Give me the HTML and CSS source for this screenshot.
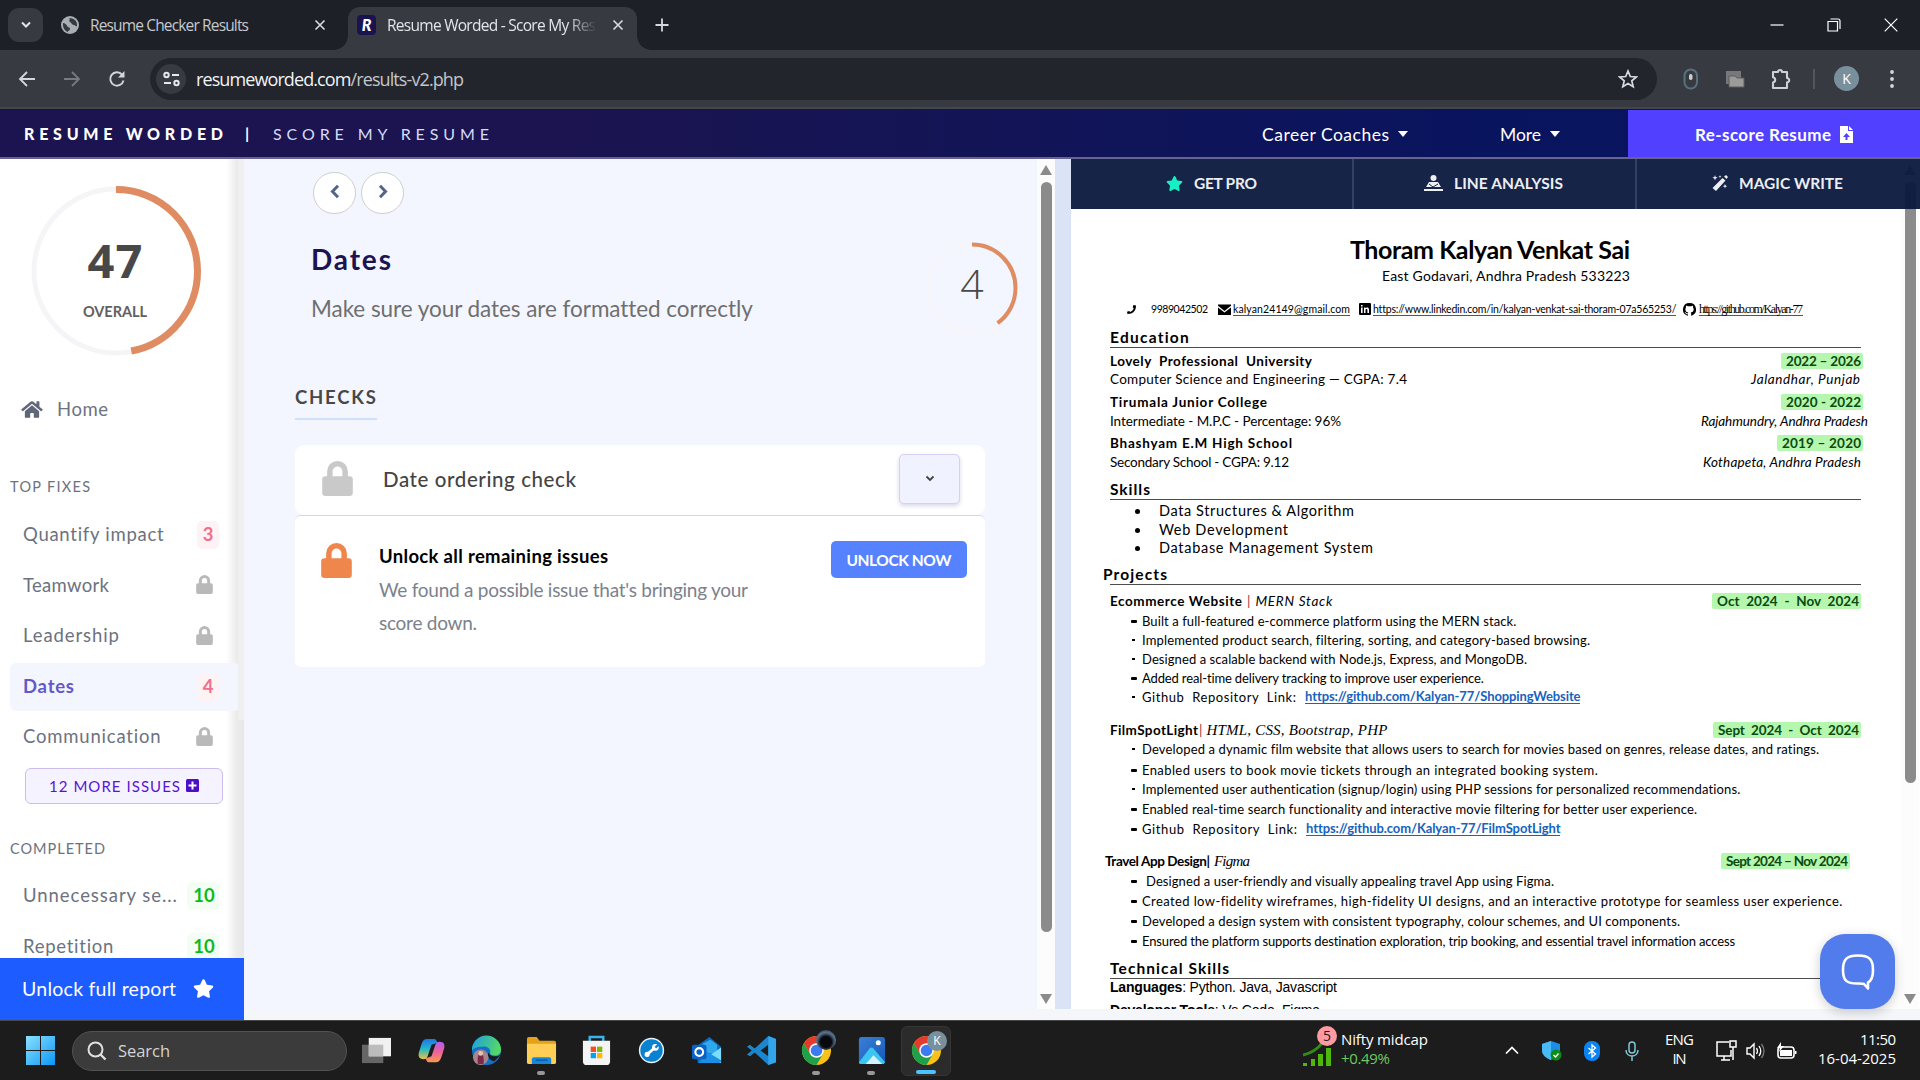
FILE: index.html
```html
<!DOCTYPE html>
<html lang="en">
<head>
<meta charset="utf-8">
<title>Resume Worded - Score My Resume</title>
<link rel="stylesheet" href="styles.css">
</head>
<body>
<svg class="defs" aria-hidden="true">
  <symbol id="lock" viewBox="0 0 448 512"><path d="M400 224h-24v-72a152 152 0 0 0-304 0v72H48a48 48 0 0 0-48 48v192a48 48 0 0 0 48 48h352a48 48 0 0 0 48-48V272a48 48 0 0 0-48-48zm-104 0H152v-72a72 72 0 0 1 144 0z"/></symbol>
  <symbol id="star" viewBox="0 0 576 512"><path d="M259.300 17.800L194 150.200 47.900 171.500c-26.200 3.800-36.700 36.100-17.700 54.600l105.700 103-25 145.500c-4.500 26.300 23.200 46 46.400 33.700L288 439.600l130.700 68.700c23.200 12.200 50.900-7.400 46.400-33.700l-25-145.500 105.700-103c19-18.500 8.500-50.800-17.700-54.600L382 150.200 316.700 17.800c-11.700-23.600-45.600-23.900-57.400 0z"/></symbol>
  <symbol id="cross" viewBox="0 0 12 12"><path d="M1.500 1.500l9 9M10.500 1.500l-9 9" fill="none" stroke="currentColor" stroke-width="1.700"/></symbol>
  <symbol id="chrome" viewBox="0 0 32 32"><circle cx="16" cy="16" r="15" fill="#fbc116"/><path d="M3 8.500A15 15 0 0 1 29 8.500H16L9.500 19.750z" fill="#e33b2e"/><path d="M3 8.500A15 15 0 0 0 16 31l6.500-11.250H9.500z" fill="#1fa04b"/><circle cx="16" cy="16" r="7.500" fill="#fff"/><circle cx="16" cy="16" r="6" fill="#3d7cf0"/></symbol>
</svg>

<header class="tabstrip">
  <button class="tab-search"><svg width="12" height="8" viewBox="0 0 12 8"><path d="M2 1.500l4 4 4-4" fill="none" stroke="#e3e5e8" stroke-width="2"/></svg></button>
  <div class="tab">
    <svg class="globe" viewBox="0 0 18 18"><circle cx="9" cy="9" r="9" fill="#a9aeb5"/><path d="M2 7c2 0 4 2 4 3s3 1 3 3-2 1-2 3c-3-1-5.500-4-5-9zM8 2c2 1-1 3 1 4s2 3 4 3 1 2 3 1c.5-4-2-8-8-8z" fill="#353940"/></svg>
    <span class="tab-title" data-w="159">Resume Checker Results</span>
    <svg class="tab-close" viewBox="0 0 12 12"><use href="#cross"/></svg>
  </div>
  <div class="tab tab-active">
    <span class="favicon">R</span>
    <span class="tab-title fade"><span data-w="209">Resume Worded - Score My Res</span></span>
    <svg class="tab-close" viewBox="0 0 12 12"><use href="#cross"/></svg>
  </div>
  <svg class="new-tab" viewBox="0 0 14 14"><path d="M7 .5v13M.5 7h13" stroke="#d5d8dc" stroke-width="1.800"/></svg>
  <div class="window-controls">
    <svg viewBox="0 0 14 14"><path d="M.5 7h13" stroke="#fff" stroke-width="1.200"/></svg>
    <svg viewBox="0 0 14 14"><path d="M1 3.500h9.500V13H1z" fill="none" stroke="#fff" stroke-width="1.200"/><path d="M3.500 1H11q2 0 2 2v8" fill="none" stroke="#fff" stroke-width="1.200"/></svg>
    <svg viewBox="0 0 14 14"><path d="M.7.700l12.600 12.600M13.300.700L.7 13.300" stroke="#fff" stroke-width="1.200"/></svg>
  </div>
</header>

<div class="toolbar">
  <div class="nav-icons">
    <svg viewBox="0 0 18 18"><path d="M17 9H2M9 2L2 9l7 7" fill="none" stroke="#d3d6da" stroke-width="1.800"/></svg>
    <svg viewBox="0 0 18 18"><path d="M1 9h15M9 2l7 7-7 7" fill="none" stroke="#777a80" stroke-width="1.800"/></svg>
    <svg viewBox="0 0 18 18"><path d="M15.500 10.500A6.700 6.700 0 1 1 14 4.500l1.500 1.700" fill="none" stroke="#d3d6da" stroke-width="1.900"/><path d="M16.500 1v6.500H10z" fill="#d3d6da"/></svg>
  </div>
  <div class="omnibox">
    <span class="site-info"><svg width="17" height="16" viewBox="0 0 17 16"><g fill="none" stroke="#e6e8ea" stroke-width="2"><circle cx="3.500" cy="4" r="2.200"/><path d="M9 4h7M1 12h7"/><circle cx="13.500" cy="12" r="2.200"/></g></svg></span>
    <span class="url" data-w="268">resumeworded.com<span class="path">/results-v2.php</span></span>
    <svg class="bookmark" viewBox="0 0 20 20"><path d="M10 2l2.300 5.500 6 .5-4.500 3.900 1.400 5.800L10 14.600l-5.200 3.100 1.400-5.800L1.700 8l6-.5z" fill="none" stroke="#d9dbde" stroke-width="1.700"/></svg>
  </div>
  <div class="extensions">
    <svg width="16" height="22" viewBox="0 0 16 22"><rect x="1.500" y="1.500" width="12.500" height="19" rx="6.200" fill="none" stroke="#56717c" stroke-width="2"/><rect x="6" y="6" width="3.500" height="6" rx="1.700" fill="#c9ced2"/></svg>
    <svg width="20" height="18" viewBox="0 0 20 18"><path d="M1 1h15v13H1z" fill="#77787a"/><path d="M4 6h6l2 2h7v9H4z" fill="#9b9b99" stroke="#5b5c5e"/></svg>
    <svg width="22" height="22" viewBox="0 0 22 22"><path d="M3 4h5a2 2 0 1 1 4 0h5v6a2.200 2.200 0 1 1 0 4.400V20H3v-5.500a2.700 2.700 0 0 0 0-5.300z" fill="none" stroke="#cfd1d5" stroke-width="2.100" stroke-linejoin="round"/></svg>
    <i class="divider"></i>
    <span class="profile">K</span>
    <svg class="kebab" width="6" height="20" viewBox="0 0 6 20"><g fill="#d3d6da"><circle cx="3" cy="3" r="1.900"/><circle cx="3" cy="10" r="1.900"/><circle cx="3" cy="17" r="1.900"/></g></svg>
  </div>
</div>

<nav class="site-header">
  <span class="brand" data-w="199">RESUME WORDED</span>
  <span class="brand-rule">|</span>
  <span class="brand-sub" data-w="216">SCORE MY RESUME</span>
  <a class="menu coaches"><span data-w="127">Career Coaches</span><i class="caret"></i></a>
  <a class="menu more"><span data-w="41">More</span><i class="caret"></i></a>
  <a class="rescore"><span data-w="136">Re-score Resume</span>
    <svg width="13" height="17" viewBox="0 0 13 17"><path fill="#fff" d="M0 0h8v5h5v12H0zM9 0l4 4H9z"/><path fill="#5140ff" d="M6.500 7l3.500 4H7.500v3h-2v-3H3z"/></svg></a>
</nav>

<div class="workspace">
  <aside class="sidebar">
    <div class="sidebar-scroll">
      <div class="overall">
        <svg viewBox="0 0 170 170"><circle cx="85" cy="85" r="82" fill="none" stroke="#f5f5f7" stroke-width="5"/><circle class="arc" cx="85" cy="85" r="81.500" pathLength="100" stroke-width="7" stroke-dasharray="47 100"/></svg>
        <div class="overall-text"><b data-w="55">47</b><span data-w="64">OVERALL</span></div>
      </div>
      <a class="home"><svg width="22" height="19" viewBox="0 0 576 512"><path d="M280 148L96 300v164a16 16 0 0 0 16 16h112a16 16 0 0 0 16-16v-96a16 16 0 0 1 16-16h64a16 16 0 0 1 16 16v96a16 16 0 0 0 16 16h112a16 16 0 0 0 16-16V300L296 148a12 12 0 0 0-16 0zM572 251l-84-68V44a12 12 0 0 0-12-12h-56a12 12 0 0 0-12 12v73l-90-74a48 48 0 0 0-61 0L4 251a12 12 0 0 0-1 17l25 31a12 12 0 0 0 17 2l235-194a12 12 0 0 1 16 0l235 194a12 12 0 0 0 17-2l25-31a12 12 0 0 0-1-17z"/></svg><span data-w="51">Home</span></a>
      <h4><span data-w="80">TOP FIXES</span></h4>
      <ul>
        <li><span data-w="141">Quantify impact</span><em class="bad">3</em></li>
        <li><span data-w="86">Teamwork</span><svg class="lock"><use href="#lock"/></svg></li>
        <li><span data-w="96">Leadership</span><svg class="lock"><use href="#lock"/></svg></li>
        <li class="current"><span data-w="51">Dates</span><em class="bad">4</em></li>
        <li><span data-w="138">Communication</span><svg class="lock"><use href="#lock"/></svg></li>
      </ul>
      <a class="more-issues"><span data-w="131">12 MORE ISSUES</span><svg width="13" height="13" viewBox="0 0 13 13"><rect width="13" height="13" rx="1.500" fill="#4b0fc9"/><path d="M6.500 2.500v8M2.500 6.500h8" stroke="#fff" stroke-width="2"/></svg></a>
      <h4 class="completed"><span data-w="95">COMPLETED</span></h4>
      <ul>
        <li><span data-w="154">Unnecessary se...</span><em class="good">10</em></li>
        <li><span data-w="91">Repetition</span><em class="good">10</em></li>
      </ul>
    </div>
    <a class="unlock-report"><span data-w="154">Unlock full report</span><svg><use href="#star"/></svg></a>
  </aside>

  <main class="report">
    <div class="pager">
      <button><svg width="10" height="15" viewBox="0 0 10 15"><path d="M8 1.800L2.500 7.500 8 13.200" fill="none" stroke="#55628a" stroke-width="3"/></svg></button>
      <button><svg width="10" height="15" viewBox="0 0 10 15"><path d="M2 1.800l5.500 5.700L2 13.200" fill="none" stroke="#55628a" stroke-width="3"/></svg></button>
    </div>
    <div class="report-head">
      <div>
        <h1><span data-w="80">Dates</span></h1>
        <p><span data-w="441">Make sure your dates are formatted correctly</span></p>
      </div>
      <div class="score">
        <svg viewBox="0 0 92 92"><circle cx="46" cy="46" r="44" fill="none" stroke="#f6f5fa" stroke-width="3"/><circle class="arc" cx="46" cy="46" r="43.500" pathLength="100" stroke-width="4" stroke-dasharray="40 100"/></svg>
        <span>4</span>
      </div>
    </div>
    <h2 class="checks"><span data-w="81">CHECKS</span></h2>
    <section class="card check">
      <svg class="big-lock"><use href="#lock"/></svg>
      <span data-w="193">Date ordering check</span>
      <button><svg width="10" height="8" viewBox="0 0 10 8"><path d="M1.500 1.500L5 5l3.500-3.500" fill="none" stroke="#444" stroke-width="1.800"/></svg></button>
    </section>
    <section class="card upsell">
      <svg class="big-lock orange"><use href="#lock"/></svg>
      <div class="upsell-text">
        <h3><span data-w="229">Unlock all remaining issues</span></h3>
        <p><span data-w="369">We found a possible issue that's bringing your</span></p>
        <p><span data-w="98">score down.</span></p>
      </div>
      <a class="unlock-now"><span data-w="105">UNLOCK NOW</span></a>
    </section>
  </main>

  <div class="scrollbar main-bar"><i class="up"></i><i class="thumb"></i><i class="down"></i></div>

  <section class="preview">
    <div class="actions">
      <a class="get-pro"><svg width="17" height="15"><use href="#star" fill="#16f0c4"/></svg><span data-w="63">GET PRO</span></a>
      <a><svg width="19" height="17" viewBox="0 0 19 17"><circle cx="9.500" cy="3" r="3"/><path d="M5 7h9l3 5H2zM0 14h19v2H0z"/><path d="M5 9l4 3 5-3" stroke="#16244a" fill="none"/></svg><span data-w="109">LINE ANALYSIS</span></a>
      <a><svg width="16" height="16" viewBox="0 0 16 16"><path d="M10.500 3l3 2.500L4 16l-3.500-3zM3 0l.7 2 2 .7-2 .7L3 5.500l-.7-2-2-.8 2-.7zM8 0l.4 1.200 1.200.4-1.200.4L8 3.200 7.600 2l-1.200-.4 1.200-.4zM13 9l.6 1.600 1.700.6-1.700.6L13 13.500l-.6-1.700-1.700-.6 1.700-.6zM12 1.500L14 0l2 2-1.500 2z"/></svg><span data-w="104">MAGIC WRITE</span></a>
    </div>
    <div class="viewport">
      <article class="resume">
        <div class="line name"><b data-w="280">Thoram Kalyan Venkat Sai</b></div>
        <div class="line place"><span data-w="248">East Godavari, Andhra Pradesh 533223</span></div>
        <div class="line contact">
          <svg class="phone" width="9" height="9" viewBox="0 0 9 9"><path d="M6.500 0L9 .5C9 6 6 9 .5 9L0 6.800l2.200-.8 1 1C5 6.300 6.200 5 6.700 3.300l-1-1z"/></svg>
          <span class="tel" data-w="57">9989042502</span>
          <svg class="mail" width="13" height="11" viewBox="0 0 13 11"><path d="M0 .5h13v1.300L6.500 7 0 1.800zM0 3.500L6.500 8.500 13 3.500V11H0z"/></svg>
          <u data-w="117">kalyan24149@gmail.com</u>
          <svg class="linkedin" width="12" height="12" viewBox="0 0 12 12"><rect width="12" height="12" rx="1"/><path fill="#fff" d="M2 4.500h1.600V10H2zM2 2h1.600v1.500H2zM5 4.500h1.500v.8C7.500 4 10 4.200 10 6.600V10H8.400V7c0-1.500-1.900-1.300-1.900 0v3H5z"/></svg>
          <u data-w="303">https://www.linkedin.com/in/kalyan-venkat-sai-thoram-07a565253/</u>
          <svg class="github" width="13" height="13" viewBox="0 0 16 16"><path d="M8 0a8 8 0 0 0-2.530 15.590c.4.070.55-.17.55-.38v-1.490c-2.010.37-2.530-.49-2.690-.94-.09-.23-.48-.94-.82-1.130-.28-.15-.68-.52-.01-.53.63-.01 1.080.58 1.230.82.720 1.210 1.870.87 2.330.66.070-.52.280-.87.510-1.070-1.780-.2-3.640-.89-3.640-3.950 0-.87.310-1.590.82-2.150-.08-.2-.36-1.020.08-2.120 0 0 .67-.21 2.200.82a7.500 7.500 0 0 1 4 0c1.530-1.040 2.200-.82 2.200-.82.440 1.100.160 1.920.080 2.120.510.560.820 1.270.820 2.150 0 3.070-1.870 3.750-3.650 3.950.290.250.540.730.540 1.480v2.200c0 .21.150.46.550.38A8 8 0 0 0 8 0z"/></svg>
          <u class="serif" data-w="104">https://github.com/Kalyan-77</u>
        </div>

        <h5><span data-w="79">Education</span></h5>
        <div class="line m5"><b data-w="202">Lovely&nbsp; Professional&nbsp; University</b><mark><span data-w="75">2022 – 2026</span></mark></div>
        <div class="line m2"><span data-w="297">Computer Science and Engineering — CGPA: 7.4</span><i class="inset1" data-w="109">Jalandhar, Punjab</i></div>
        <div class="line m7"><b data-w="157">Tirumala Junior College</b><mark><span data-w="75">2020 - 2022</span></mark></div>
        <div class="line m3"><span data-w="231">Intermediate - M.P.C - Percentage: 96%</span><i class="outset" data-w="167">Rajahmundry, Andhra Pradesh</i></div>
        <div class="line m6"><b data-w="182">Bhashyam E.M High School</b><mark><span data-w="79">2019 – 2020</span></mark></div>
        <div class="line m3"><span data-w="179">Secondary School - CGPA: 9.12</span><i data-w="158">Kothapeta, Andhra Pradesh</i></div>

        <h5 class="m11"><span data-w="40">Skills</span></h5>
        <div class="line skill m3"><span data-w="195">Data Structures &amp; Algorithm</span></div>
        <div class="line skill m3"><span data-w="129">Web Development</span></div>
        <div class="line skill m2"><span data-w="214">Database Management System</span></div>

        <h5 class="m10 shifted"><span data-w="64">Projects</span></h5>
        <div class="line project m8"><b data-w="132">Ecommerce Website</b><s>|</s><i data-w="77">MERN Stack</i><mark><span data-w="142">Oct&nbsp; 2024&nbsp; -&nbsp; Nov&nbsp; 2024</span></mark></div>
        <div class="line item m4 wide"><span data-w="374">Built a full-featured e-commerce platform using the MERN stack.</span></div>
        <div class="line item m3"><span data-w="448">Implemented product search, filtering, sorting, and category-based browsing.</span></div>
        <div class="line item m3"><span data-w="385">Designed a scalable backend with Node.js, Express, and MongoDB.</span></div>
        <div class="line item m3 wide"><span data-w="342">Added real-time delivery tracking to improve user experience.</span></div>
        <div class="line item m3"><span data-w="154">Github&nbsp; Repository&nbsp; Link:</span><a data-w="275">https://github.com/Kalyan-77/ShoppingWebsite</a></div>

        <div class="line project m17"><b data-w="88">FilmSpotLight</b><s class="tight">|</s><i class="serif stack" data-w="181">HTML, CSS, Bootstrap, PHP</i><mark><span data-w="141">Sept&nbsp; 2024&nbsp; -&nbsp; Oct&nbsp; 2024</span></mark></div>
        <div class="line item m3"><span data-w="677">Developed a dynamic film website that allows users to search for movies based on genres, release dates, and ratings.</span></div>
        <div class="line item m5 wide"><span data-w="456">Enabled users to book movie tickets through an integrated booking system.</span></div>
        <div class="line item m3"><span data-w="599">Implemented user authentication (signup/login) using PHP sessions for personalized recommendations.</span></div>
        <div class="line item m4 wide"><span data-w="555">Enabled real-time search functionality and interactive movie filtering for better user experience.</span></div>
        <div class="line item m4 wide"><span data-w="155">Github&nbsp; Repository&nbsp; Link:</span><a data-w="254">https://github.com/Kalyan-77/FilmSpotLight</a></div>

        <div class="line m16 travel"><b data-w="105">Travel App Design|</b><i class="serif figma" data-w="36">Figma</i><mark><span data-w="122">Sept 2024 – Nov 2024</span></mark></div>
        <div class="line item m4 wide"><span class="nudge" data-w="408">Designed a user-friendly and visually appealing travel App using Figma.</span></div>
        <div class="line item m4 wide"><span data-w="700">Created low-fidelity wireframes, high-fidelity UI designs, and an interactive prototype for seamless user experience.</span></div>
        <div class="line item m4 wide"><span data-w="538">Developed a design system with consistent typography, colour schemes, and UI components.</span></div>
        <div class="line item m4 wide"><span data-w="594">Ensured the platform supports destination exploration, trip booking, and essential travel information access</span></div>

        <h5 class="m11"><span data-w="119">Technical Skills</span></h5>
        <div class="line arial"><span data-w="227"><b>Languages</b>: Python. Java, Javascript</span></div>
        <div class="line arial m7"><span data-w="210"><b>Developer Tools</b>: Vs Code, Figma</span></div>
      </article>
    </div>
    <div class="scrollbar page-bar"><i class="up"></i><i class="thumb"></i><i class="down"></i></div>
    <button class="chat"><svg width="34" height="38" viewBox="0 0 34 38"><path d="M17 2.500C6 2.500 2 6 2 17s4 13.500 14 13.500c3 0 5-.2 7 .5l4 4.500v-6c4-2 5-6 5-12.500C32 6 28 2.500 17 2.500z" fill="none" stroke="#fff" stroke-width="2.600" stroke-linejoin="round"/></svg></button>
  </section>
</div>

<footer class="taskbar">
  <svg class="start" viewBox="0 0 29 29"><defs><linearGradient id="win" x2="1" y2="1"><stop stop-color="#8be0ff"/><stop offset="1" stop-color="#0b98f5"/></linearGradient></defs><path fill="url(#win)" d="M0 0h14v14H0zM15 0h14v14H15zM0 15h14v14H0zM15 15h14v14H15z"/></svg>
  <div class="search"><svg width="20" height="20" viewBox="0 0 20 20"><circle cx="8.500" cy="8.500" r="7" fill="none" stroke="#e0e0e0" stroke-width="2"/><path d="M13.500 13.500l5 5" stroke="#e0e0e0" stroke-width="2.400"/></svg><span data-w="52">Search</span></div>
  <div class="apps">
    <span><svg viewBox="0 0 32 32"><path d="M1 10h22v19H1z" fill="#666"/><path d="M8 3h23v19H8z" fill="#f1f1f1"/><path d="M8 10h15v12H8z" fill="#bcbcbc"/></svg></span>
    <span><svg viewBox="0 0 32 32"><defs><linearGradient id="cpa" y2="1" x2="0"><stop stop-color="#1d74e8"/><stop offset=".5" stop-color="#26b8c7"/><stop offset="1" stop-color="#efc43a"/></linearGradient><linearGradient id="cpb" y2="1" x2="0"><stop stop-color="#b45cf0"/><stop offset=".5" stop-color="#f0609a"/><stop offset="1" stop-color="#f79a4a"/></linearGradient></defs><path d="M11 4h8q2 0 3 4l-6 2-4 12q-1 3-4 3-8 0-4-10C6 8 7 4 11 4z" fill="url(#cpa)"/><path d="M21 28h-8q-2 0-3-4l6-2 4-12q1-3 4-3 8 0 4 10c-2 7-3 11-7 11z" fill="url(#cpb)"/></svg></span>
    <span><svg viewBox="0 0 32 32"><defs><linearGradient id="edge" x2="1" y2=".3"><stop stop-color="#1c9be8"/><stop offset="1" stop-color="#53d868"/></linearGradient></defs><circle cx="16" cy="16" r="15" fill="#1171c8"/><path d="M1 16a15 15 0 0 1 30-1c0 5-4 7-8 6-3 0-4-2-3-4 0-4-5-6-9-5-5 0-9 2-10 4z" fill="url(#edge)"/><path d="M31 20c-4 3-11 3-13-2-2 4 1 8 6 9z" fill="#1c1c1c"/><circle cx="10" cy="23" r="8" fill="#a8848b"/><path d="M7 30q-1-11 3-12 4 2 3 12z" fill="#7b2946"/><circle cx="10" cy="19" r="2.500" fill="#e0c6b8"/></svg></span>
    <span class="running"><svg viewBox="0 0 32 32"><path d="M1 4q0-2 2-2h8l3 4h15q2 0 2 2v8H1z" fill="#e3a21a"/><path d="M1 9h30v19q0 2-2 2H3q-2 0-2-2z" fill="#ffcf55"/><path d="M6 30v-5q0-2 2-2h16q2 0 2 2v5z" fill="#1687d9"/><path d="M10 26h12" stroke="#0b5ca8" stroke-width="1.500"/></svg></span>
    <span><svg viewBox="0 0 32 32"><path d="M9 7V2h14v5" fill="none" stroke="#35b5ee" stroke-width="2.500"/><path d="M2 6h28v21q0 4-4 4H6q-4 0-4-4z" fill="#f4f4f4"/><path d="M10 12h5.500v5.500H10z" fill="#f25022"/><path d="M16.500 12H22v5.500h-5.500z" fill="#7fba00"/><path d="M10 18.500h5.500V24H10z" fill="#00a4ef"/><path d="M16.500 18.500H22V24h-5.500z" fill="#ffb900"/></svg></span>
    <span><svg viewBox="0 0 32 32"><circle cx="16" cy="16" r="12.300" fill="#0b82cf" stroke="#e8f2f8" stroke-width="1.500"/><path d="M11 20.500l8-7" stroke="#fff" stroke-width="2.800" stroke-linecap="round"/><circle cx="20" cy="12.800" r="3.400" fill="#fff"/><path d="M20 13l5-4.500" stroke="#0b82cf" stroke-width="2.400"/><circle cx="11.500" cy="20" r="2.600" fill="#fff"/></svg></span>
    <span><svg viewBox="0 0 32 32"><path d="M5 12L19 2l12 10v17H7z" fill="#0f6cc4"/><path d="M12 9l8-4 7 5v9H12z" fill="#2ea9ee"/><path d="M31 13v16H8z" fill="#7bdcfb"/><path d="M8 29h20q3 0 3-3L16 17z" fill="#1b8fe4"/><rect x="1" y="10" width="15" height="15" rx="2" fill="#0a62c4"/><circle cx="8.500" cy="17.500" r="4" fill="none" stroke="#fff" stroke-width="2.200"/></svg></span>
    <span><svg viewBox="0 0 32 32"><path d="M23 1l8 3v24l-8 3L9 18l-5 4-3-2 5-4-5-4 3-2 5 4zM23 10l-8 6 8 6z" fill="#1a86cf" fill-rule="evenodd"/><path d="M23 1l8 3v24l-8 3z" fill="#33a5ea"/></svg></span>
    <span class="running"><svg viewBox="0 0 32 32"><use href="#chrome"/></svg><i class="avatar dark"></i></span>
    <span class="running"><svg viewBox="0 0 32 32"><defs><linearGradient id="photo" x2="1" y2="1"><stop stop-color="#3b7fd6"/><stop offset="1" stop-color="#1459b8"/></linearGradient></defs><rect x="3" y="2" width="27" height="28" rx="3" fill="url(#photo)"/><path d="M3 28L14 14q2-2 4 0l12 14q-1 2-3 2H6q-3 0-3-2z" fill="#3cc5f2"/><path d="M10 30l8-9 9 9z" fill="#d4f3fd"/><circle cx="23" cy="8" r="2.600" fill="#fff"/></svg></span>
    <span class="active-app"><svg viewBox="0 0 32 32"><use href="#chrome"/></svg><i class="avatar">K</i></span>
  </div>
  <div class="stock">
    <svg width="28" height="32" viewBox="0 0 28 32"><path d="M0 28h4v3H0zM8 24h4v7H8zM15 19h5v12h-5zM23 13h5v18h-5z" fill="#4fb80f"/><path d="M0 20C9 18 14 15 19 8" stroke="#2f8f13" stroke-width="3" fill="none"/></svg>
    <i class="count">5</i>
    <div class="quote"><span data-w="87">Nifty midcap</span><span class="gain" data-w="49">+0.49%</span></div>
  </div>
  <div class="tray">
    <svg class="tray-up" width="14" height="9" viewBox="0 0 14 9"><path d="M1 7.500l6-6 6 6" fill="none" stroke="#fff" stroke-width="1.700"/></svg>
    <svg class="shield" width="20" height="20" viewBox="0 0 20 20"><path d="M9 0l9 3v6c0 5-4 8-9 10C4 17 0 14 0 9V3z" fill="#1c8de4"/><path d="M9 0v19C4 17 0 14 0 9V3z" fill="#49baf5"/><circle cx="14" cy="14" r="5.500" fill="#0e8a16"/><path d="M11.500 14l2 2 3-3.500" fill="none" stroke="#fff" stroke-width="1.400"/></svg>
    <svg class="bt" width="16" height="20" viewBox="0 0 16 20"><rect width="16" height="20" rx="7.500" fill="#0a84f5"/><path d="M4.500 7l7 6L8 16V4l3.500 3-7 6" fill="none" stroke="#fff" stroke-width="1.300"/></svg>
    <svg class="mic" width="14" height="20" viewBox="0 0 14 20"><g fill="none" stroke="#7fc6d8" stroke-width="1.500"><rect x="4" y="1" width="6" height="11" rx="3"/><path d="M1 9c0 8 12 8 12 0M7 15v5"/></g></svg>
    <div class="lang"><span data-w="29">ENG</span><span data-w="14">IN</span></div>
    <svg class="net" width="21" height="21" viewBox="0 0 21 21"><path d="M13 2H1v14h14v-6M5 20h9M8 16v4" fill="none" stroke="#fff" stroke-width="1.500"/><path d="M14 1h6v6h-6zM17 7v13" fill="none" stroke="#fff" stroke-width="1.500"/></svg>
    <svg class="vol" width="19" height="18" viewBox="0 0 19 18"><path d="M1 6h3l4-4v14l-4-4H1z" fill="none" stroke="#fff" stroke-width="1.400"/><path d="M10.500 6q2 3 0 6M13 4q3.500 5 0 10" fill="none" stroke="#fff" stroke-width="1.300"/><path d="M15.500 2q5 7 0 14" fill="none" stroke="#777" stroke-width="1.300"/></svg>
    <svg class="bat" width="21" height="18" viewBox="0 0 21 18"><rect x="2" y="5" width="16" height="11" rx="3" fill="none" stroke="#fff" stroke-width="1.600"/><path d="M4 8h12v6H4zM19 9h1.500v3H19zM5 0L1 6h3L3 10l5-6H5z" fill="#fff"/></svg>
    <div class="clock"><span data-w="36">11:50</span><span data-w="78">16-04-2025</span></div>
  </div>
</footer>
<script src="fit.js"></script>
</body>
</html>
```
FILE: styles.css
```css
* { box-sizing: border-box; margin: 0; padding: 0; }
body { width: 1920px; height: 1080px; overflow: hidden; background: #f5f6fa; font-family: Lato, sans-serif; display: flex; flex-direction: column; }
button { border: 0; background: none; font: inherit; display: grid; place-items: center; }
ul { list-style: none; }
svg { display: block; flex: none; }
.defs { position: absolute; width: 0; height: 0; }
[data-w] { display: block; flex: none; white-space: nowrap; }
.arc { fill: none; stroke: #df8c63; transform: rotate(-90deg); transform-origin: center; }

/* Browser frame */
.tabstrip { position: relative; z-index: 1; height: 50px; flex: none; background: #1d2027; display: flex; align-items: center; color: #c5c8cd; font: 15.5px "Open Sans", sans-serif; }
.tab-search { width: 35px; height: 34px; margin-left: 8px; border-radius: 11px; background: #383a42; }
.tab { width: 305px; height: 42px; display: flex; align-items: center; padding-left: 18px; }
.globe { width: 18px; height: 18px; margin-right: 11px; }
.tab-close { width: 12px; height: 12px; margin-left: 65px; color: #d5d8dc; }
.tab-active { position: relative; width: 289px; height: 43px; align-self: flex-end; padding: 0 0 7px 9px; border-radius: 12px 12px 0 0; background: #383a42; color: #e4e5e8; }
.tab-active::before, .tab-active::after { content: ""; position: absolute; bottom: 0; width: 14px; height: 14px; }
.tab-active::before { left: -14px; background: radial-gradient(circle at 0 0, transparent 13.5px, #383a42 14px); }
.tab-active::after { right: -14px; background: radial-gradient(circle at 100% 0, transparent 13.5px, #383a42 14px); }
.favicon { width: 19px; height: 20px; margin-right: 11px; border-radius: 4px; background: #1b1350; color: #fff; font: italic 900 16px/20px Lato, sans-serif; text-align: center; }
.fade { width: 210px; mask-image: linear-gradient(90deg, #000 180px, transparent); }
.tab-active .tab-close { margin-left: 15px; }
.new-tab { width: 14px; height: 14px; margin-left: 18px; }
.window-controls { margin-left: auto; display: flex; gap: 43px; padding-right: 22px; }
.window-controls svg { width: 14px; height: 14px; }
.toolbar { height: 59px; flex: none; background: #383a42; border-bottom: 2px solid #454648; display: flex; align-items: center; }
.nav-icons { display: flex; gap: 27px; padding-left: 18px; width: 150px; }
.nav-icons svg { width: 18px; height: 18px; }
.omnibox { width: 1507px; height: 42px; border-radius: 21px; background: #23252c; display: flex; align-items: center; padding-left: 6px; }
.site-info { width: 30px; height: 30px; border-radius: 50%; background: #383a42; display: grid; place-items: center; margin-right: 10px; }
.url { color: #f2f3f4; font: 18px "Open Sans", sans-serif; }
.path { color: #c3c6ca; }
.bookmark { width: 20px; height: 20px; margin-left: auto; margin-right: 19px; }
.extensions { flex: 1; display: flex; align-items: center; padding-left: 26px; }
.extensions svg:nth-child(2) { margin-left: 26px; }
.extensions svg:nth-child(3) { margin-left: 25px; }
.divider { width: 2px; height: 20px; margin-left: 21px; background: #54565c; }
.profile { width: 25px; height: 25px; margin-left: 19px; border-radius: 50%; background: #78909c; color: #fff; font: 14px/25px "Open Sans", sans-serif; text-align: center; }
.extensions .kebab { margin-left: 30px; }

/* Site header */
.site-header { height: 50px; flex: none; background: linear-gradient(90deg, #1b1450 0, #1b1450 30%, #0a145e 75%, #08145f); border-bottom: 2px solid #67638f; color: #fff; display: flex; align-items: center; }
.brand { margin-left: 24px; font-size: 16px; font-weight: 900; }
.brand-rule { width: 8px; margin: 0 22px 0 20px; font-size: 16px; font-weight: 700; line-height: 16px; text-align: center; }
.brand-sub { font-size: 16px; color: #d6dcf8; }
.menu { display: flex; align-items: center; font-size: 17.5px; padding-top: 2px; }
.caret { margin-left: 9px; border: 5px solid transparent; border-top: 6px solid #fff; border-bottom: 0; }
.coaches { margin-left: 773px; }
.more { margin-left: 92px; }
.rescore { height: 47px; margin: 1px 0 0 auto; width: 292px; padding: 2px 0 0 67px; background: #5140ff; display: flex; align-items: center; gap: 9px; font-size: 17px; font-weight: 700; }

/* Workspace */
.workspace { height: 861px; flex: none; display: flex; }
.sidebar { width: 244px; display: flex; flex-direction: column; color: #6c7280; font-size: 18.5px; background: linear-gradient(#efefef, #efefef) right top / 6px 561px no-repeat, linear-gradient(90deg, #fff 226px, #ebebeb 237px, #e8e8e8); }
.sidebar-scroll { flex: 1; overflow: hidden; padding-top: 27px; }
.overall { width: 170px; height: 170px; margin-left: 31px; display: grid; }
.overall > * { grid-area: 1 / 1; }
.overall-text { display: flex; flex-direction: column; align-items: center; padding: 47px 2px 0 0; }
.overall-text b { font: 700 47px/55px "Open Sans", sans-serif; color: #484848; }
.overall-text span { font-size: 14.5px; line-height: 18px; font-weight: 700; color: #616161; margin-top: 15px; }
.home { display: flex; align-items: center; gap: 14px; height: 20px; margin: 43px 0 0 21px; fill: #5f6678; }
h4 { height: 20px; margin: 58px 0 14px 10px; font-size: 14.5px; line-height: 20px; font-weight: 400; }
.completed { margin: 35px 0 13px 10px; }
.sidebar ul { display: grid; gap: 2.5px; padding: 0 6px 0 10px; }
.sidebar li { height: 48px; padding: 0 19px 0 13px; display: flex; align-items: center; justify-content: space-between; border-radius: 6px 3px 3px 6px; }
.sidebar li > span { padding-bottom: 2px; }
.sidebar li.current { background: #f3f6ff; color: #6458c8; font-weight: 700; }
.sidebar em { height: 28px; width: 22px; border-radius: 5px; font-style: normal; font-weight: 700; line-height: 27px; text-align: center; }
.bad { background: #fdf3f5; color: #f0708c; }
.sidebar em.good { background: #f4fdf4; color: #0dba1c; width: 32px; padding-left: 2px; }
.lock { width: 17px; height: 19px; margin: -2px 6px 0 0; fill: #b9b9b9; }
.more-issues { width: 198px; height: 36px; margin: 7px 0 0 25px; padding: 0 0 1px 23px; border: 1px solid #cbbdf2; border-radius: 6px; background: #f5f3ff; color: #5a14d2; font-size: 15px; display: flex; align-items: center; gap: 6px; }
.unlock-report { height: 62px; flex: none; background: #1d5cff; color: #fff; display: flex; align-items: center; gap: 17px; padding: 0 0 2px 22px; font-size: 19.5px; }
.unlock-report svg { width: 21px; height: 19px; fill: #fff; }

.report { width: 793px; height: 850px; background: #f3f6ff; padding: 13px 0 0 51px; }
.pager { display: flex; gap: 5px; margin-left: 18px; }
.pager button { width: 43px; height: 42px; padding: 0 0 4px 0; border: 1px solid #cfcfcf; border-radius: 21px; background: #fff; }
.report-head { display: flex; margin: 26px 0 0 16px; height: 92px; width: 707px; justify-content: space-between; }
.report-head h1 { font-size: 28px; line-height: 32px; color: #1b1450; padding-top: 3px; }
.report-head p { font-size: 22.5px; line-height: 28px; color: #6f6f6f; margin-top: 20px; }
.score { display: grid; width: 92px; height: 92px; margin-top: 2px; }
.score > * { grid-area: 1 / 1; }
.score span { font: 300 41px/82px "Open Sans", sans-serif; text-align: center; color: #484848; }
.checks { width: 82px; height: 35px; margin-top: 53px; border-bottom: 2px solid #d0e0fc; font-size: 18.5px; line-height: 24px; color: #484848; }
.card { width: 690px; background: #fff; border-radius: 9px; display: flex; }
.check { height: 70px; margin-top: 25px; padding: 0 25px 3px 27px; align-items: center; font-size: 20.5px; font-weight: 500; color: #444; }
.big-lock { width: 31px; height: 35px; margin-right: 30px; fill: #c9c9c9; }
.orange { fill: #ef874d; margin-right: 27px; }
.check button { width: 61px; height: 50px; margin-left: auto; border: 1px solid #d5d0f6; border-radius: 5px; background: #f1f2ff; box-shadow: 0 2px 4px #d8d8e8; }
.upsell { height: 152px; padding: 27px 18px 0 26px; border-top: 1px solid #c9d8f5; border-radius: 6px; }
.upsell-text h3 { font-size: 18.5px; line-height: 28px; font-weight: 700; color: #000; margin-top: -1px; }
.upsell-text p { font-size: 19px; line-height: 33px; color: #7b828c; position: relative; top: 3px; }
.unlock-now { width: 136px; height: 37px; margin: -2px 0 0 auto; border-radius: 5px; background: #5682ff; color: #fff; display: grid; place-items: center; font-size: 15.5px; font-weight: 700; }

.scrollbar { position: relative; width: 18px; height: 850px; background: #fcfcfd; display: flex; flex-direction: column; align-items: center; padding: 6px 0 5px; }
.up { border: 6px solid transparent; border-top: 0; border-bottom: 10px solid #8b8b8b; }
.down { margin-top: auto; border: 6px solid transparent; border-bottom: 0; border-top: 10px solid #8b8b8b; }
.thumb { width: 11px; height: 750px; margin-top: 7px; border-radius: 6px; background: #8b8b8b; }

/* Resume preview */
.preview { position: relative; width: 865px; height: 850px; border-left: 16px solid #dbe4f6; background: #fff; }
.actions { position: absolute; inset: 0 0 auto 0; z-index: 2; height: 50px; padding-bottom: 0; background: rgba(10, 24, 62, .95); display: grid; grid-template-columns: 283px 283px 1fr; color: #eceef3; fill: #eceef3; font-size: 15.5px; font-weight: 700; }
.actions a { display: flex; align-items: center; justify-content: center; gap: 11px; border-right: 2px solid #363f66; padding: 0 2px 2px 0; }
.actions .get-pro { padding-left: 2px; }
.actions a:last-child { border: 0; padding-right: 2px; }
.page-bar { position: absolute; right: 1px; top: 0; }
.page-bar .thumb { height: 601px; }
.viewport { height: 850px; overflow: hidden; padding-top: 50px; }
.resume { width: 751px; margin-left: 39px; color: #000; font-size: 13.5px; }
.line { height: 16px; line-height: 16px; display: flex; align-items: center; }
.line.name { height: 50px; padding-top: 30px; margin-left: 9px; justify-content: center; font-size: 25px; }
.place { margin: 9px 0 0 272px; font-size: 14px; }
.contact { margin-top: 17px; font-size: 10.5px; }
.contact u { text-decoration: none; line-height: 12px; border-bottom: 1px solid #555; }
.phone { margin-left: 17px; }
.tel { margin-left: 15px; }
.mail { margin: 0 2px 0 10px; }
.linkedin { margin: 0 2px 0 9px; }
.github { margin: 0 3px 0 7px; }
.serif { font-family: "Liberation Serif", serif; }
.contact .serif { font-size: 12px; }
.resume h5 { height: 19px; border-bottom: 1px solid #4d4d4d; font-size: 15.5px; line-height: 16px; }
.contact + h5 { margin-top: 12px; }
.shifted span { margin-left: -7px; }
.line > mark, .line > span + i, .line > b + i:last-child { margin-left: auto; }
mark { height: 16px; padding: 0 2px 0 5px; margin-right: -2px; border-radius: 2px; background: #b5f7ae; color: #0b4a10; font-weight: 700; }
.project mark { margin-right: 0; }
.line i.inset1 { margin-right: 1px; }
.line i.outset { margin-right: -7px; }
s { text-decoration: none; color: #a0302a; margin: 0 5px; }
s.tight { margin: 0 4px 0 1px; }
.stack, .figma { font-size: 15px; }
.figma { margin-left: 4px; }
.travel { margin-left: -5px; padding-right: 13px; }
.skill { padding-left: 49px; font-size: 14.5px; }
.skill::before { content: ""; width: 5px; height: 5px; border-radius: 50%; background: #000; margin: 0 19px 0 -24px; }
.item { padding-left: 32px; font-size: 13px; }
.item::before { content: ""; width: 3px; height: 2px; background: #000; margin: 0 7px 0 -10px; }
.item.wide::before { width: 6px; height: 3px; border-radius: 1px; margin: 0 5px 0 -11px; }
.item a { margin-left: 9px; line-height: 13px; border-bottom: 1px solid #1763bd; color: #1763bd; font-weight: 700; }
.nudge { margin-left: 4px; }
.arial { font: 14px/16px "Liberation Sans", sans-serif; }
.m2 { margin-top: 2px; } .m3 { margin-top: 3px; } .m4 { margin-top: 4px; } .m5 { margin-top: 5px; }
.m6 { margin-top: 6px; } .m7 { margin-top: 7px; } .m8 { margin-top: 8px; } .m10 { margin-top: 10px; }
.m11 { margin-top: 11px; } .m16 { margin-top: 16px; } .m17 { margin-top: 17px; }
.chat { position: absolute; z-index: 3; right: 25px; bottom: 0; width: 75px; height: 75px; border-radius: 25px; background: #527ceb; box-shadow: 0 3px 12px #0003; }

/* Taskbar */
.taskbar { height: 60px; flex: none; background: #1c1c1c; border-top: 1px solid #474747; color: #fff; font: 15px/19px "Open Sans", sans-serif; display: flex; align-items: center; }
.start { width: 29px; height: 29px; margin-left: 26px; }
.search { width: 275px; height: 40px; margin-left: 17px; border: 1px solid #525252; border-radius: 20px; background: #3b3b3b; display: flex; align-items: center; gap: 11px; padding-left: 14px; color: #d4d4d4; font-size: 16.5px; }
.apps { display: flex; gap: 5px; margin-left: 4px; }
.apps span { position: relative; width: 50px; height: 50px; display: grid; place-items: center; border-radius: 6px; }
.apps svg { width: 31px; height: 31px; }
.apps .running::after, .active-app::after { content: ""; position: absolute; bottom: 1px; width: 8px; height: 4px; border-radius: 2px; background: #989898; }
.apps .active-app { background: #2b2b2b; border: 1px solid #353535; }
.apps .active-app::after { width: 20px; background: #4cc2ff; }
.avatar { position: absolute; left: 25px; top: 4px; width: 20px; height: 20px; border-radius: 50%; background: #78909c; font: 12px/20px "Open Sans", sans-serif; text-align: center; }
.dark { background: radial-gradient(circle at 50% 60%, #07090c 35%, #5a7490 60%, #10151c); }
.stock { position: relative; display: flex; align-items: center; gap: 10px; margin-left: 352px; }
.count { position: absolute; left: 14px; top: -4px; width: 20px; height: 20px; border-radius: 50%; background: #ff9aa2; color: #1c1c1c; font: 14px/20px "Open Sans", sans-serif; text-align: center; }
.gain { color: #6ccb5f; }
.quote, .lang, .clock { padding-bottom: 3px; }
.tray { display: flex; align-items: center; }
.tray-up { margin-left: 77px; }
.shield { margin-left: 23px; }
.bt { margin-left: 22px; }
.mic { margin-left: 25px; }
.lang { width: 29px; margin-left: 26px; display: grid; justify-items: center; }
.net { margin-left: 22px; }
.vol { margin-left: 9px; }
.bat { margin-left: 11px; }
.clock { width: 78px; margin-left: 21px; display: grid; justify-items: end; }
```
FILE: fit.js
```js
document.querySelectorAll('[data-w]').forEach(function (el) {
  var width = Number(el.dataset.w);
  var range = document.createRange();
  range.selectNodeContents(el);
  var natural = range.getBoundingClientRect().width;
  var gaps = el.textContent.length - 1;
  el.style.letterSpacing = ((width - natural) / gaps).toFixed(3) + 'px';
  el.style.width = width + 'px';
});
```
